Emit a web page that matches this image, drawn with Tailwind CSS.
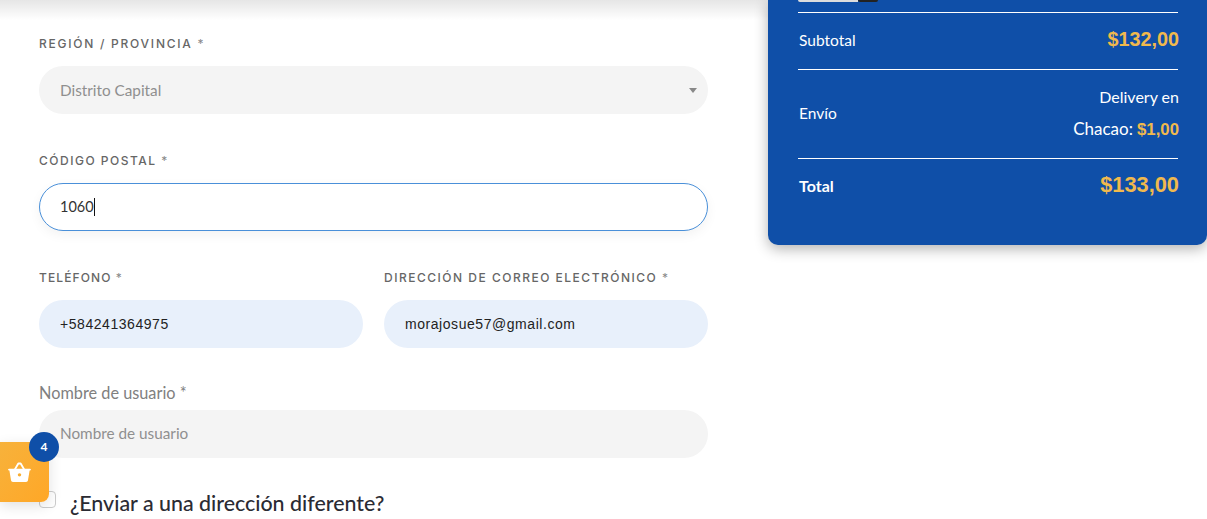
<!DOCTYPE html>
<html lang="es">
  <head>
    <meta charset="UTF-8" />
    <title>Finalizar compra</title>
    <script src="https://cdn.jsdelivr.net/npm/@tailwindcss/browser@4"></script>
  </head>
  <body class="bg-white w-[1207px] h-[519px] overflow-hidden relative font-['Lato',sans-serif]">
    <!-- Header shadow -->
    <div class="absolute top-0 left-0 w-[768px] h-5 bg-gradient-to-b from-[#e6e6e6] to-white"></div>

    <div class="relative flex items-start">
      <!-- Form -->
      <div class="w-[768px] pl-[39px] pr-[60px] pt-[36px] flex flex-col">
        <label class="h-[15px] leading-[15px] font-['Inter',sans-serif] text-[12px] font-medium tracking-[1.75px] uppercase text-[#666]">Región / Provincia <span class="font-normal text-[#888]">*</span></label>
        <div class="mt-[15px] h-[48px] rounded-full bg-[#f4f4f4] flex items-center justify-between pl-[21px] pr-[11px]">
          <span class="text-[15.3px] text-[#8f8f8f]">Distrito Capital</span>
          <span class="w-0 h-0 border-x-[4.5px] border-x-transparent border-t-[5px] border-t-[#888]"></span>
        </div>

        <label class="mt-[39px] h-[15px] leading-[15px] font-['Inter',sans-serif] text-[12px] font-medium tracking-[1.5px] uppercase text-[#666]">Código postal <span class="font-normal text-[#888]">*</span></label>
        <div class="mt-[15px] h-[48px] rounded-full bg-white border border-[#4a90d9] flex items-center pl-[20px] shadow-[0_4px_12px_rgba(0,0,0,0.05)]">
          <span class="text-[14.5px] text-[#333]">1060</span>
          <span class="w-px h-[18px] bg-[#111]"></span>
        </div>

        <div class="mt-[39px] grid grid-cols-2 gap-x-[21px]">
          <div class="flex flex-col">
            <label class="h-[15px] leading-[15px] font-['Inter',sans-serif] text-[12px] font-medium tracking-[1.1px] uppercase text-[#666]">Teléfono <span class="font-normal text-[#888]">*</span></label>
            <div class="mt-[15px] h-[48px] rounded-full bg-[#e8f0fb] flex items-center pl-[21px] font-['Liberation_Sans',sans-serif] text-[14px] tracking-[0.55px] text-[#222]">+584241364975</div>
          </div>
          <div class="flex flex-col">
            <label class="h-[15px] leading-[15px] font-['Inter',sans-serif] text-[12px] font-medium tracking-[1.5px] uppercase text-[#666]">Dirección de correo electrónico <span class="font-normal text-[#888]">*</span></label>
            <div class="mt-[15px] h-[48px] rounded-full bg-[#e8f0fb] flex items-center pl-[21px] font-['Liberation_Sans',sans-serif] text-[14px] tracking-[0.55px] text-[#222]">morajosue57@gmail.com</div>
          </div>
        </div>

        <label class="mt-[35px] h-[20px] leading-[20px] text-[16.3px] text-[#808080]">Nombre de usuario *</label>
        <div class="mt-[7px] h-[48px] rounded-full bg-[#f4f4f4] flex items-center pl-[21px] pb-[1px] text-[15.3px] text-[#8f8f8f]">Nombre de usuario</div>

        <div class="mt-[32px] h-[26px] flex items-center gap-[14px]">
          <span class="w-[17px] h-[17px] mt-[-7px] rounded-[4px] border border-[#ccc] bg-white"></span>
          <span class="text-[21.4px] font-medium text-[#2b2b33]">¿Enviar a una dirección diferente?</span>
        </div>
      </div>

      <!-- Order summary -->
      <div class="w-[439px] h-[245px] bg-[#0f4fa8] rounded-b-[10px] shadow-[0_4px_14px_rgba(0,0,0,0.3)] pl-[30px] pr-[29px] text-white text-[15.5px]">
        <!-- Bottom edge of the last product image -->
        <div class="h-[12px]">
          <div class="w-[80px] h-[2px] flex">
            <span class="w-[60px] bg-[#ddd] rounded-bl-[3px]"></span>
            <span class="w-[20px] bg-[#222] rounded-b-full"></span>
          </div>
        </div>
        <div class="h-[57px] border-t border-white flex items-center justify-between pl-px">
          <span>Subtotal</span>
          <span class="pb-[2px] mr-[-1px] font-['Liberation_Sans',sans-serif] font-bold text-[19.8px] text-[#f0b94d]">$132,00</span>
        </div>
        <div class="h-[89px] border-t border-white flex items-center justify-between pl-px">
          <span>Envío</span>
          <div class="pb-[2px] mr-[-1px] text-right leading-[32px] text-[16px]">
            <div>Delivery en</div>
            <div><span class="text-[17px]">Chacao:</span> <span class="font-['Liberation_Sans',sans-serif] font-bold text-[16.8px] text-[#f0b94d]">$1,00</span></div>
          </div>
        </div>
        <div class="h-[55px] border-t border-white flex items-center justify-between pl-px">
          <span class="font-bold text-[16px]">Total</span>
          <span class="pb-[2px] mr-[-1px] font-['Liberation_Sans',sans-serif] font-bold text-[21.8px] text-[#f0b94d]">$133,00</span>
        </div>
      </div>
    </div>

    <!-- Floating cart -->
    <div class="absolute left-0 top-[442px] w-[49px] h-[60px] rounded-r-[8px] bg-gradient-to-br from-[#f7b23b] to-[#ffa726] shadow-[0_4px_14px_rgba(0,0,0,0.12)] flex items-center pl-[8px]">
      <svg width="23" height="20" viewBox="0 0 24 21" fill="white">
        <path d="M1 7h22c.6 0 1 .4 1 1s-.4 1-1 1h-.4l-1.700 10.200c-.2 1-1 1.800-2 1.800H5.100c-1 0-1.800-.8-2-1.800L1.400 9H1c-.6 0-1-.4-1-1s.4-1 1-1z"/>
        <path d="M7 8l3.800-6.500h2.400L17 8" stroke="white" stroke-width="2" stroke-linecap="round" stroke-linejoin="round" fill="none"/>
        <circle cx="12" cy="13.500" r="1.800" fill="#f9ad30"/>
      </svg>
    </div>
    <div class="absolute left-[29px] top-[432px] w-[30px] h-[30px] rounded-full bg-[#0f4fa8] text-white text-[12px] font-bold flex items-center justify-center">4</div>
  </body>
</html>
